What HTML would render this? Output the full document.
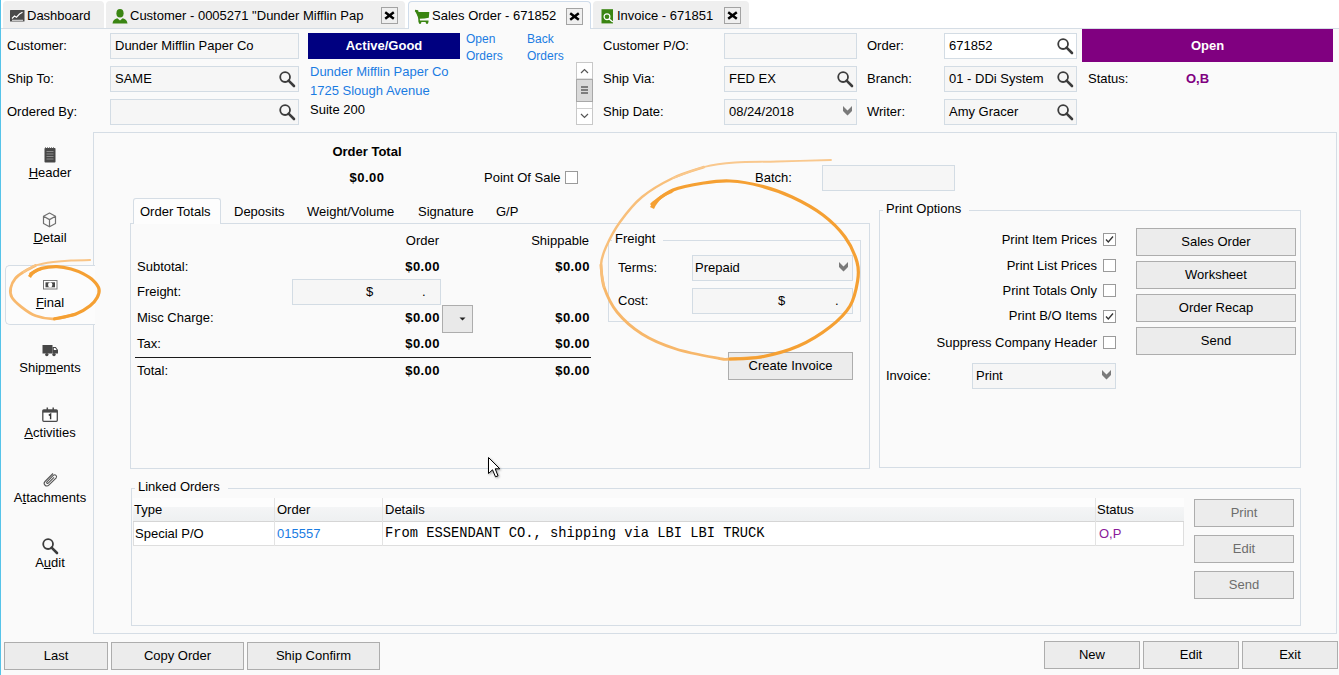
<!DOCTYPE html>
<html><head><meta charset="utf-8">
<style>
*{margin:0;padding:0;box-sizing:border-box}
html,body{width:1339px;height:675px;overflow:hidden;background:#fff}
body{position:relative;font-family:"Liberation Sans",sans-serif;font-size:13px;color:#000}
.a{position:absolute}
.t{position:absolute;white-space:pre;line-height:15px;font-size:13px}
.b{font-weight:bold}
.m{letter-spacing:0.45px}
.r{text-align:right}
.c{text-align:center}
.inp{position:absolute;border:1px solid #d3dce4;background:#f6f6f6}
.btn{position:absolute;border:1px solid #adadad;background:#ececec;text-align:center;line-height:26px;white-space:pre}
.grp{position:absolute;border:1px solid #d5dde5}
.lbl{position:absolute;white-space:pre;line-height:15px;background:#fafafa;padding:0 8px 0 3px}
.tab{position:absolute;top:1px;height:27px;background:#efefef;border-radius:4px 4px 0 0}
.xb{position:absolute;width:17px;height:17px;border:1px solid #a3a3a3;background:#efefef}
.lnk{color:#1a7ce2}
.cb{position:absolute;width:13px;height:13px;border:1px solid #9a9a9a;background:#fff}
svg{position:absolute;overflow:visible}
</style></head><body>
<!-- left blue line -->
<div class="a" style="left:0;top:0;width:1px;height:675px;background:#55c3e9;z-index:5"></div>
<!-- content background -->
<div class="a" style="left:1px;top:28px;width:1338px;height:647px;background:#fafafa;border-top:1px solid #d5dde5"></div>

<!-- TABS -->
<div class="tab" style="left:3px;width:101px"></div>
<div class="tab" style="left:106px;width:299px"></div>
<div class="tab" style="left:408px;width:183px;height:28px;background:#fafafa;border:1px solid #cfdceb;border-bottom:none"></div>
<div class="tab" style="left:593px;width:156px"></div>

<!-- dashboard icon -->
<svg style="left:10px;top:10px" width="15" height="12" viewBox="0 0 15 12">
<rect x="0" y="0" width="14.5" height="11.5" rx="0.5" fill="#4a4a4a"/>
<polyline points="2,8.5 4.5,6 6.5,7.2 9.5,4 12.5,2.2" fill="none" stroke="#fff" stroke-width="1.1"/>
<rect x="2" y="9.8" width="11" height="0.9" fill="#fff"/>
</svg>
<div class="t" style="left:27px;top:8px">Dashboard</div>

<!-- customer icon -->
<svg style="left:112px;top:9px" width="16" height="15" viewBox="0 0 16 15">
<ellipse cx="8" cy="4.3" rx="3.6" ry="4.3" fill="#3a8512"/>
<path d="M0.5,14.5 C0.8,11.3 2.5,9.8 5.3,9.2 L8,11.6 L10.7,9.2 C13.5,9.8 15.2,11.3 15.5,14.5 Z" fill="#3a8512"/>
</svg>
<div class="t" style="left:130px;top:8px">Customer - 0005271 "Dunder Mifflin Pap</div>
<div class="xb" style="left:381px;top:7px"></div>
<svg style="left:381px;top:7px" width="17" height="17" viewBox="0 0 17 17"><path d="M4.2,5.3 L12.8,11.7 M12.8,5.3 L4.2,11.7" stroke="#000" stroke-width="2.5"/></svg>

<!-- cart icon -->
<svg style="left:414px;top:9px" width="17" height="16" viewBox="0 0 17 16">
<path d="M1,2 L3,2 L4.5,3 L15.3,3 L14.8,8.8 Q11,9.6 5,9.8 Z" fill="#3a8512"/>
<path d="M1,1.6 L3.5,2 L5,9.5 L5.2,12.3 L14.5,12.3" fill="none" stroke="#3a8512" stroke-width="1.6"/>
<circle cx="6" cy="13.6" r="1.3" fill="#3a8512"/><circle cx="13" cy="13.6" r="1.3" fill="#3a8512"/>
</svg>
<div class="t" style="left:432px;top:8px">Sales Order - 671852</div>
<div class="xb" style="left:566px;top:8px"></div>
<svg style="left:566px;top:8px" width="17" height="17" viewBox="0 0 17 17"><path d="M4.2,5.3 L12.8,11.7 M12.8,5.3 L4.2,11.7" stroke="#000" stroke-width="2.5"/></svg>

<!-- invoice icon -->
<svg style="left:601px;top:9px" width="14" height="15" viewBox="0 0 14 15">
<rect x="0.5" y="0.2" width="11.5" height="14.2" fill="#3a8512"/>
<circle cx="6" cy="7.8" r="2.9" fill="none" stroke="#fff" stroke-width="1.2"/>
<path d="M8.2,10 L11.8,13" stroke="#fff" stroke-width="1.4"/>
</svg>
<div class="t" style="left:617px;top:8px">Invoice - 671851</div>
<div class="xb" style="left:724px;top:7px"></div>
<svg style="left:724px;top:7px" width="17" height="17" viewBox="0 0 17 17"><path d="M4.2,5.3 L12.8,11.7 M12.8,5.3 L4.2,11.7" stroke="#000" stroke-width="2.5"/></svg>

<!-- HEADER FIELDS -->
<div class="t" style="left:7px;top:38px">Customer:</div>
<div class="t" style="left:7px;top:71px">Ship To:</div>
<div class="t" style="left:7px;top:104px">Ordered By:</div>
<div class="inp" style="left:110px;top:33px;width:189px;height:26px"></div>
<div class="inp" style="left:110px;top:66px;width:189px;height:26px"></div>
<div class="inp" style="left:110px;top:99px;width:189px;height:26px"></div>
<div class="t" style="left:115px;top:38px">Dunder Mifflin Paper Co</div>
<div class="t" style="left:115px;top:71px">SAME</div>

<div class="a" style="left:308px;top:33px;width:152px;height:26px;background:#000080"></div>
<div class="t b c" style="left:308px;top:38px;width:152px;color:#fff">Active/Good</div>
<div class="t lnk" style="left:466px;top:31px;font-size:12px;line-height:17px">Open
Orders</div>
<div class="t lnk" style="left:527px;top:31px;font-size:12px;line-height:17px">Back
Orders</div>
<div class="t lnk" style="left:310px;top:64px">Dunder Mifflin Paper Co</div>
<div class="t lnk" style="left:310px;top:83px">1725 Slough Avenue</div>
<div class="t" style="left:310px;top:102px">Suite 200</div>

<!-- scrollbar -->
<div class="a" style="left:576px;top:62px;width:17px;height:63px;background:#fff;border:1px solid #c8c8c8"></div>
<div class="a" style="left:576px;top:79px;width:17px;height:23px;background:#dadada;border:1px solid #a8a8a8"></div>
<div class="a" style="left:577px;top:108px;width:15px;height:1px;background:#d0d0d0"></div>
<div class="a" style="left:577px;top:78px;width:15px;height:1px;background:#e3e3e3"></div>
<svg style="left:576px;top:62px" width="17" height="63" viewBox="0 0 17 63">
<path d="M5,11 L8.5,7.5 L12,11" fill="none" stroke="#555" stroke-width="1.2"/>
<path d="M5,25 H12 M5,28 H12 M5,31 H12" stroke="#606060" stroke-width="1.4"/>
<path d="M5,52 L8.5,55.5 L12,52" fill="none" stroke="#555" stroke-width="1.2"/>
</svg>

<div class="t" style="left:603px;top:38px">Customer P/O:</div>
<div class="t" style="left:603px;top:71px">Ship Via:</div>
<div class="t" style="left:603px;top:104px">Ship Date:</div>
<div class="inp" style="left:724px;top:33px;width:133px;height:26px"></div>
<div class="inp" style="left:724px;top:66px;width:133px;height:26px"></div>
<div class="inp" style="left:724px;top:99px;width:133px;height:26px"></div>
<div class="t" style="left:729px;top:71px">FED EX</div>
<div class="t" style="left:729px;top:104px">08/24/2018</div>

<div class="t" style="left:867px;top:38px">Order:</div>
<div class="t" style="left:867px;top:71px">Branch:</div>
<div class="t" style="left:867px;top:104px">Writer:</div>
<div class="inp" style="left:944px;top:33px;width:133px;height:26px;background:#fff"></div>
<div class="inp" style="left:944px;top:66px;width:133px;height:26px"></div>
<div class="inp" style="left:944px;top:99px;width:133px;height:26px"></div>
<div class="t" style="left:949px;top:38px">671852</div>
<div class="t" style="left:949px;top:71px">01 - DDi System</div>
<div class="t" style="left:949px;top:104px">Amy Gracer</div>

<div class="a" style="left:1082px;top:29px;width:251px;height:33px;background:#800080"></div>
<div class="t b c" style="left:1082px;top:38px;width:251px;color:#fff">Open</div>
<div class="t" style="left:1088px;top:71px">Status:</div>
<div class="t b" style="left:1186px;top:71px;color:#800080">O,B</div>

<svg width="0" height="0" style="position:absolute"><defs>
<g id="srch"><circle cx="6.1" cy="6.1" r="4.9" fill="none" stroke="#3c3c3c" stroke-width="1.8"/><path d="M9.6,9.6 L15,15" stroke="#3c3c3c" stroke-width="2.6" stroke-linecap="round"/></g>
<g id="chev"><path d="M0,0 L4.5,4.5 L9,0 L9,5 L4.5,9.5 L0,5 Z" fill="#7a7a7a"/></g>
</defs></svg>
<svg style="left:279px;top:71px" width="16" height="16"><use href="#srch"/></svg>
<svg style="left:279px;top:104px" width="16" height="16"><use href="#srch"/></svg>
<svg style="left:837px;top:71px" width="16" height="16"><use href="#srch"/></svg>
<svg style="left:843px;top:106px" width="9" height="10"><use href="#chev"/></svg>
<svg style="left:1057px;top:38px" width="16" height="16"><use href="#srch"/></svg>
<svg style="left:1057px;top:71px" width="16" height="16"><use href="#srch"/></svg>
<svg style="left:1057px;top:104px" width="16" height="16"><use href="#srch"/></svg>

<!-- MAIN PANEL -->
<div class="a" style="left:93px;top:132px;width:1244px;height:502px;border:1px solid #d5dde5;background:#fafafa"></div>
<!-- Final tab -->
<div class="a" style="left:5px;top:265px;width:90px;height:60px;border:1px solid #d5dde5;border-right:none;border-radius:5px 0 0 5px;background:#fcfcfc"></div>

<!-- NAV ICONS -->
<svg style="left:44px;top:147px" width="12" height="16" viewBox="0 0 12 16">
<rect x="0.5" y="1" width="11" height="14.5" rx="0.8" fill="#474747"/>
<path d="M1,0.8 h10" stroke="#666" stroke-width="1" stroke-dasharray="1,1"/>
<path d="M2.5,4.5 h7 M2.5,7 h7 M2.5,9.5 h7 M2.5,12 h7" stroke="#8a8a8a" stroke-width="1"/>
</svg>
<svg style="left:43px;top:212px" width="14" height="16" viewBox="0 0 14 16">
<path d="M6.5,1 L12.5,4.3 L12.5,11.5 L6.5,14.8 L0.5,11.5 L0.5,4.3 Z M0.5,4.3 L6.5,7.6 L12.5,4.3 M6.5,7.6 L6.5,14.8" fill="none" stroke="#707070" stroke-width="1.2" stroke-linejoin="round"/>
</svg>
<svg style="left:43px;top:280px" width="15" height="10" viewBox="0 0 15 10">
<rect x="0.5" y="0.5" width="13.5" height="8.5" fill="#fff" stroke="#777" stroke-width="1"/>
<rect x="2.5" y="2.3" width="9.5" height="5" fill="#484848"/>
<ellipse cx="7.2" cy="4.8" rx="2.2" ry="2.6" fill="#fff"/>
</svg>
<svg style="left:42px;top:344px" width="17" height="13" viewBox="0 0 17 13">
<path d="M0.5,1 H10.5 V9.5 H0.5 Z" fill="#474747"/>
<path d="M10.5,3 H13.8 L16,6 V9.5 H10.5 Z" fill="#474747"/>
<path d="M11.8,4 H13.3 L14.6,6 H11.8 Z" fill="#fff"/>
<circle cx="4.8" cy="10.6" r="1.7" fill="#474747"/><circle cx="12" cy="10.6" r="1.7" fill="#474747"/>
</svg>
<svg style="left:42px;top:406px" width="16" height="16" viewBox="0 0 16 16">
<rect x="0.8" y="4" width="14.5" height="11.3" rx="1" fill="#fff" stroke="#4a4a4a" stroke-width="1.3"/>
<rect x="0.8" y="4" width="14.5" height="2.6" fill="#4a4a4a"/>
<path d="M5.3,1.5 V5.5 M11.2,1.5 V5.5" stroke="#4a4a4a" stroke-width="1.5"/>
<path d="M6.8,9.3 L8.6,8.1 V13.3" fill="none" stroke="#333" stroke-width="1.4"/>
</svg>
<svg style="left:42px;top:472px" width="16" height="16" viewBox="0 0 16 16">
<path d="M11,1.5 L3,9.5 A2.6,2.6 0 0 0 6.8,13.2 L14.2,5.8 A1.9,1.9 0 0 0 11.5,3.2 L4.8,10 A0.9,0.9 0 0 0 6,11.3 L12,5.3" fill="none" stroke="#555" stroke-width="1.1"/>
</svg>
<svg style="left:42px;top:538px" width="16" height="16"><use href="#srch"/></svg>

<div class="t" style="left:0;top:165px;width:100px;text-align:center"><u>H</u>eader</div>
<div class="t" style="left:0;top:230px;width:100px;text-align:center"><u>D</u>etail</div>
<div class="t" style="left:0;top:295px;width:100px;text-align:center"><u>F</u>inal</div>
<div class="t" style="left:0;top:360px;width:100px;text-align:center">Ship<u>m</u>ents</div>
<div class="t" style="left:0;top:425px;width:100px;text-align:center"><u>A</u>ctivities</div>
<div class="t" style="left:0;top:490px;width:100px;text-align:center">A<u>t</u>tachments</div>
<div class="t" style="left:0;top:555px;width:100px;text-align:center">A<u>u</u>dit</div>
<!--UNDERLINES-->

<!-- ORDER TOTAL -->
<div class="t b c" style="left:317px;top:144px;width:100px">Order Total</div>
<div class="t b c m" style="left:317px;top:170px;width:100px">$0.00</div>
<div class="t" style="left:484px;top:170px">Point Of Sale</div>
<div class="cb" style="left:565px;top:171px"></div>
<div class="t" style="left:755px;top:170px">Batch:</div>
<div class="inp" style="left:822px;top:165px;width:133px;height:26px"></div>

<!-- TABS -->
<div class="grp" style="left:130px;top:223px;width:740px;height:246px"></div>
<div class="a" style="left:133px;top:198px;width:88px;height:26px;border:1px solid #d5dde5;border-bottom:none;border-radius:3px 3px 0 0;background:#fdfdfd"></div>
<div class="t" style="left:140px;top:204px">Order Totals</div>
<div class="t" style="left:234px;top:204px">Deposits</div>
<div class="t" style="left:307px;top:204px">Weight/Volume</div>
<div class="t" style="left:418px;top:204px">Signature</div>
<div class="t" style="left:496px;top:204px">G/P</div>

<div class="t r" style="left:338px;top:233px;width:101px">Order</div>
<div class="t r" style="left:488px;top:233px;width:101px">Shippable</div>
<div class="t" style="left:137px;top:259px">Subtotal:</div>
<div class="t" style="left:137px;top:284px">Freight:</div>
<div class="t" style="left:137px;top:310px">Misc Charge:</div>
<div class="t" style="left:137px;top:336px">Tax:</div>
<div class="t" style="left:137px;top:363px">Total:</div>
<div class="t b r m" style="left:339px;top:259px;width:101px">$0.00</div>
<div class="t b r m" style="left:339px;top:310px;width:101px">$0.00</div>
<div class="t b r m" style="left:339px;top:336px;width:101px">$0.00</div>
<div class="t b r m" style="left:339px;top:363px;width:101px">$0.00</div>
<div class="t b r m" style="left:489px;top:259px;width:101px">$0.00</div>
<div class="t b r m" style="left:489px;top:310px;width:101px">$0.00</div>
<div class="t b r m" style="left:489px;top:336px;width:101px">$0.00</div>
<div class="t b r m" style="left:489px;top:363px;width:101px">$0.00</div>
<div class="inp" style="left:292px;top:279px;width:149px;height:26px"></div>
<div class="t" style="left:366px;top:284px">$</div>
<div class="t" style="left:422px;top:284px">.</div>
<div class="btn" style="left:442px;top:305px;width:31px;height:28px;background:#e9e9e9"></div>
<svg style="left:459px;top:317px" width="7" height="4" viewBox="0 0 7 4"><path d="M0.5,0.5 L6.5,0.5 L3.5,3.5 Z" fill="#222"/></svg>
<div class="a" style="left:135px;top:357px;width:456px;height:1px;background:#1a1a1a"></div>

<!-- FREIGHT GROUP -->
<div class="grp" style="left:608px;top:240px;width:253px;height:82px"></div>
<div class="lbl" style="left:612px;top:231px">Freight</div>
<div class="t" style="left:618px;top:260px">Terms:</div>
<div class="t" style="left:618px;top:293px">Cost:</div>
<div class="inp" style="left:692px;top:255px;width:161px;height:26px"></div>
<div class="t" style="left:695px;top:260px">Prepaid</div>
<div class="inp" style="left:692px;top:288px;width:161px;height:26px"></div>
<div class="t" style="left:778px;top:293px">$</div>
<div class="t" style="left:835px;top:293px">.</div>
<svg style="left:839px;top:262px" width="9" height="10"><use href="#chev"/></svg>
<div class="btn" style="left:728px;top:352px;width:125px;height:28px">Create Invoice</div>

<!-- PRINT OPTIONS -->
<div class="grp" style="left:879px;top:210px;width:422px;height:258px"></div>
<div class="lbl" style="left:883px;top:201px">Print Options</div>
<div class="t r" style="left:900px;top:232px;width:197px">Print Item Prices</div>
<div class="t r" style="left:900px;top:258px;width:197px">Print List Prices</div>
<div class="t r" style="left:900px;top:283px;width:197px">Print Totals Only</div>
<div class="t r" style="left:900px;top:308px;width:197px">Print B/O Items</div>
<div class="t r" style="left:900px;top:335px;width:197px">Suppress Company Header</div>
<div class="cb" style="left:1103px;top:233px"></div>
<div class="cb" style="left:1103px;top:259px"></div>
<div class="cb" style="left:1103px;top:284px"></div>
<div class="cb" style="left:1103px;top:310px"></div>
<div class="cb" style="left:1103px;top:336px"></div>
<svg style="left:1103px;top:233px" width="13" height="13" viewBox="0 0 13 13"><path d="M3,6.5 L5.3,9 L10,3.5" fill="none" stroke="#333" stroke-width="1.3"/></svg>
<svg style="left:1103px;top:310px" width="13" height="13" viewBox="0 0 13 13"><path d="M3,6.5 L5.3,9 L10,3.5" fill="none" stroke="#333" stroke-width="1.3"/></svg>
<div class="btn" style="left:1136px;top:228px;width:160px;height:28px">Sales Order</div>
<div class="btn" style="left:1136px;top:261px;width:160px;height:28px">Worksheet</div>
<div class="btn" style="left:1136px;top:294px;width:160px;height:28px">Order Recap</div>
<div class="btn" style="left:1136px;top:327px;width:160px;height:28px">Send</div>
<div class="t" style="left:886px;top:368px">Invoice:</div>
<div class="inp" style="left:972px;top:363px;width:144px;height:26px"></div>
<div class="t" style="left:976px;top:368px">Print</div>
<svg style="left:1102px;top:370px" width="9" height="10"><use href="#chev"/></svg>

<!-- LINKED ORDERS -->
<div class="grp" style="left:131px;top:488px;width:1170px;height:138px"></div>
<div class="lbl" style="left:135px;top:479px">Linked Orders</div>
<div class="a" style="left:133px;top:498px;width:1051px;height:48px;background:#fff;border:1px solid #dedede;border-top:none"></div>
<div class="a" style="left:133px;top:498px;width:1051px;height:24px;background:linear-gradient(#fdfdfd 0,#fdfdfd 37%,#f4f5f6 38%,#eef0f1 100%);border-bottom:1px solid #d5d5d5"></div>
<div class="a" style="left:274px;top:498px;width:1px;height:48px;background:#e3e3e3"></div>
<div class="a" style="left:382px;top:498px;width:1px;height:48px;background:#e3e3e3"></div>
<div class="a" style="left:1095px;top:498px;width:1px;height:48px;background:#e3e3e3"></div>
<div class="t" style="left:134px;top:502px">Type</div>
<div class="t" style="left:277px;top:502px">Order</div>
<div class="t" style="left:385px;top:502px">Details</div>
<div class="t" style="left:1097px;top:502px">Status</div>
<div class="t" style="left:135px;top:526px">Special P/O</div>
<div class="t lnk" style="left:277px;top:526px">015557</div>
<div class="t" style="left:385px;top:526px;font-family:'Liberation Mono',monospace;font-size:13.75px">From ESSENDANT CO., shipping via LBI LBI TRUCK</div>
<div class="t" style="left:1099px;top:526px;color:#8a1a9a">O,P</div>
<div class="btn" style="left:1194px;top:499px;width:100px;height:28px;color:#6d6d6d">Print</div>
<div class="btn" style="left:1194px;top:535px;width:100px;height:28px;color:#6d6d6d">Edit</div>
<div class="btn" style="left:1194px;top:571px;width:100px;height:28px;color:#6d6d6d">Send</div>

<!-- BOTTOM BUTTONS -->
<div class="btn" style="left:4px;top:642px;width:104px;height:28px">Last</div>
<div class="btn" style="left:111px;top:642px;width:133px;height:28px">Copy Order</div>
<div class="btn" style="left:247px;top:642px;width:133px;height:28px">Ship Confirm</div>
<div class="btn" style="left:1044px;top:641px;width:96px;height:28px">New</div>
<div class="btn" style="left:1143px;top:641px;width:96px;height:28px">Edit</div>
<div class="btn" style="left:1242px;top:641px;width:96px;height:28px">Exit</div>
<!--A0--><svg style="left:0;top:0;z-index:10" width="1339" height="675" viewBox="0 0 1339 675">
<path d="M761.0,357.0 C755.8,357.3 736.9,358.8 730.0,359.0 C723.1,359.2 728.5,360.2 719.5,358.5 C710.5,356.8 688.9,353.1 676.0,349.0 C663.1,344.9 651.8,340.2 642.0,334.0 C632.2,327.8 623.3,319.8 617.0,312.0 C610.7,304.2 606.7,294.8 604.0,287.0 C601.3,279.2 601.5,268.7 601.0,265.0" fill="none" stroke="#f7b76a" stroke-width="2.8" stroke-linecap="round"/>
<path d="M604.0,287.0 C603.5,283.3 600.7,271.7 601.0,265.0 C601.3,258.3 602.8,254.2 606.0,247.0 C609.2,239.8 614.0,230.3 620.0,222.0 C626.0,213.7 633.2,204.3 642.0,197.0 C650.8,189.7 662.7,183.0 673.0,178.0 C683.3,173.0 698.8,168.8 704.0,167.0" fill="none" stroke="#f8bf7a" stroke-width="2.4" stroke-linecap="round"/>
<path d="M673.0,178.0 C678.2,176.2 693.7,169.6 704.0,167.0 C714.3,164.4 722.8,163.4 735.0,162.5 C747.2,161.6 761.0,161.9 777.0,161.5 C793.0,161.1 822.0,160.2 831.0,160.0" fill="none" stroke="#f9c88e" stroke-width="1.8" stroke-linecap="round"/>
<path d="M652.0,204.0 C655.5,201.7 664.3,193.5 673.0,190.0 C681.7,186.5 694.5,184.5 704.0,183.0 C713.5,181.5 720.5,180.5 730.0,181.0 C739.5,181.5 750.7,183.3 761.0,186.0 C771.3,188.7 781.7,192.2 792.0,197.0 C802.3,201.8 814.2,208.3 823.0,215.0 C831.8,221.7 839.3,229.2 845.0,237.0 C850.7,244.8 854.9,254.7 857.0,262.0 C859.1,269.3 858.8,273.7 857.6,281.0 C856.4,288.3 854.6,298.3 850.0,306.0 C845.4,313.7 838.6,320.3 830.0,327.0 C821.4,333.7 810.0,341.0 798.5,346.0 C787.0,351.0 772.4,354.8 761.0,357.0 C749.6,359.2 735.2,358.7 730.0,359.0" fill="none" stroke="#f5a033" stroke-width="3.2" stroke-linecap="round"/>
<path d="M650,207 C656,197 664,192 676,189 L672,193 C664,196 658,200 654,209 Z" fill="#f5a033"/>
<path d="M75.9,314.0 C72.3,314.8 61.2,318.5 54.5,318.8 C47.8,319.1 41.1,317.8 35.6,315.8 C30.1,313.8 25.2,310.0 21.3,306.9 C17.4,303.8 13.7,300.6 11.9,297.4 C10.1,294.2 10.1,291.1 10.7,287.9 C11.3,284.7 13.2,281.1 15.4,278.4 C17.6,275.7 20.3,274.1 23.7,271.9 C27.1,269.7 33.6,266.5 35.6,265.4" fill="none" stroke="#f8b96e" stroke-width="2.8" stroke-linecap="round"/>
<path d="M23.7,271.9 C25.7,270.8 30.7,267.1 35.6,265.4 C40.5,263.7 47.4,262.7 53.3,261.9 C59.2,261.1 65.0,260.7 71.1,260.4 C77.2,260.1 86.9,260.2 90.1,260.1" fill="none" stroke="#f9c485" stroke-width="2.0" stroke-linecap="round"/>
<path d="M30.8,273.7 C32.6,272.8 37.1,269.6 41.5,268.4 C45.9,267.2 52.0,266.5 56.9,266.6 C61.8,266.7 66.8,267.8 71.1,269.0 C75.4,270.2 79.2,271.7 83.0,273.7 C86.8,275.7 90.9,278.2 93.6,280.8 C96.3,283.4 98.4,286.3 99.0,289.1 C99.6,291.9 98.7,294.6 97.2,297.4 C95.7,300.2 93.6,302.9 90.1,305.7 C86.5,308.5 81.8,311.8 75.9,314.0 C70.0,316.2 58.1,318.0 54.5,318.8" fill="none" stroke="#f5a033" stroke-width="3.2" stroke-linecap="round"/>
<path d="M28,276 C31,271 36,268 44,267 L42,270 C37,271 33,274 31,278 Z" fill="#f5a033"/>
</svg>
<!--A1-->
<svg style="left:488px;top:457px;z-index:11;filter:drop-shadow(1.5px 1.5px 1px rgba(0,0,0,0.35))" width="14" height="22" viewBox="0 0 14 22"><path d="M0.5,0.5 L0.5,16.5 L4.5,12.8 L7.5,19.8 L10,18.8 L7.2,11.8 L11.8,11.8 Z" fill="#fff" stroke="#000" stroke-width="1" stroke-linejoin="miter"/></svg>



</body></html>
